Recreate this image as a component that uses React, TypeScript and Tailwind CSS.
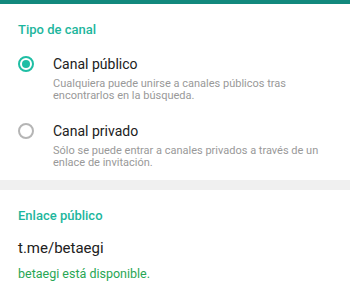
import React from "react";

function Radio({ checked }: { checked: boolean }) {
  return checked ? (
    <div className="w-4 h-4 shrink-0 rounded-full border-2 border-[#1fbea4] flex items-center justify-center">
      <div className="w-2 h-2 rounded-full bg-[#1fbea4]" />
    </div>
  ) : (
    <div className="w-4 h-4 shrink-0 rounded-full border-2 border-[#b5b5b5]" />
  );
}

function Option({
  checked,
  title,
  lines,
  className,
}: {
  checked: boolean;
  title: string;
  lines: string[];
  className?: string;
}) {
  return (
    <div className={"flex items-start gap-[19px] " + (className ?? "")}>
      <div className="pt-[1px]">
        <Radio checked={checked} />
      </div>
      <div className="flex flex-col">
        <div className="text-[14px] leading-[18px] text-[#212121]">{title}</div>
        <div className="mt-[5px] text-[11px] leading-[11.5px] text-[#999999]">
          {lines.map((l, i) => (
            <div key={i} className="whitespace-nowrap">
              {l}
            </div>
          ))}
        </div>
      </div>
    </div>
  );
}

export default function App() {
  return (
    <div className="w-[350px] h-[293px] bg-white font-['Roboto','Liberation_Sans',sans-serif] overflow-hidden flex flex-col">
      <div className="h-[4px] bg-[#12897d]" />
      <div className="px-[18px] pt-[18px] pb-[12px] flex flex-col">
        <div className="text-[13px] leading-[16px] font-medium text-[#1db69d]">Tipo de canal</div>
        <Option
          className="mt-[17px]"
          checked
          title="Canal público"
          lines={["Cualquiera puede unirse a canales públicos tras", "encontrarlos en la búsqueda."]}
        />
        <Option
          className="mt-[21px]"
          checked={false}
          title="Canal privado"
          lines={["Sólo se puede entrar a canales privados a través de un", "enlace de invitación."]}
        />
      </div>
      <div className="h-[10px] bg-[#f0f0f0]" />
      <div className="px-[18px] pt-[18px] flex flex-col">
        <div className="text-[13px] leading-[16px] font-medium text-[#1db69d]">Enlace público</div>
        <div className="mt-[14px] text-[15px] leading-[20px] text-[#212121]">t.me/betaegi</div>
        <div className="mt-[8px] text-[12.5px] leading-[16px] text-[#28a654]">betaegi está disponible.</div>
      </div>
    </div>
  );
}
